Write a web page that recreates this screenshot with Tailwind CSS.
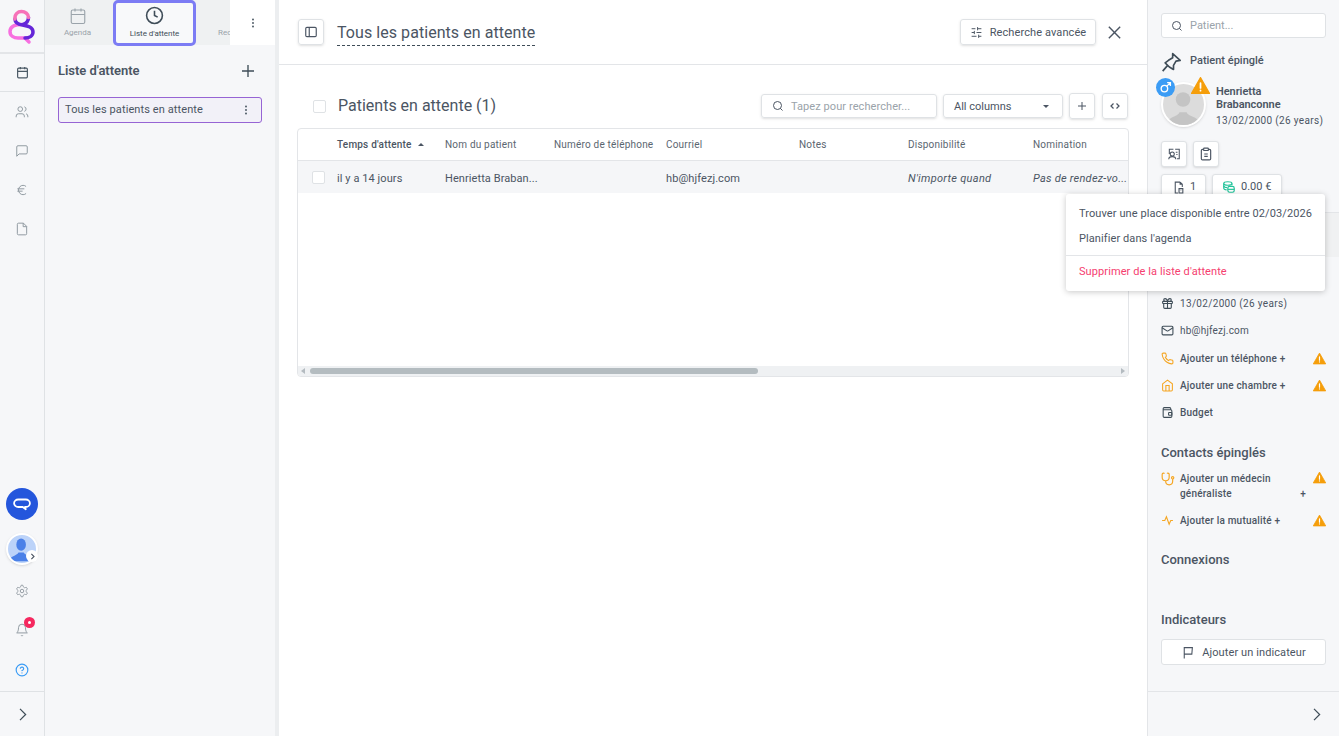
<!DOCTYPE html>
<html lang="fr">
<head>
    <meta charset="UTF-8">
    <meta name="viewport" content="width=device-width, initial-scale=1.0">
    <title>Liste d'attente</title>
    <script src="https://cdn.jsdelivr.net/npm/@tailwindcss/browser@4"></script>
</head>
<body class="h-screen overflow-hidden bg-white [font-family:Roboto,sans-serif] text-[#4b5563]">
    <svg class="hidden">
        <symbol id="warn" viewBox="0 0 24 24"><path d="M12 2 23.500 22H.5z" fill="#f59e0b" stroke="#f59e0b" stroke-width="1.500" stroke-linejoin="round"/><path d="M12 9v6M12 18v.5" stroke="#fff" stroke-width="2.200" stroke-linecap="round"/></symbol>
        <symbol id="search" viewBox="0 0 24 24"><circle cx="11" cy="11" r="8"/><path d="m21 21-4.300-4.300"/></symbol>
        <symbol id="dots" viewBox="0 0 24 24"><circle cx="12" cy="5" r="1.800" fill="currentColor" stroke="none"/><circle cx="12" cy="12" r="1.800" fill="currentColor" stroke="none"/><circle cx="12" cy="19" r="1.800" fill="currentColor" stroke="none"/></symbol>
    </svg>

    <div class="flex h-full">
        <!-- Rail de gauche -->
        <nav class="flex h-full w-[45px] shrink-0 flex-col border-r border-[#dfe2e5] bg-[#f6f7f9] text-[#8a949c]">
            <div class="flex h-[54px] items-center justify-center border-b-2 border-[#e3e5e8]">
                <svg class="shrink-0" width="34" height="38" viewBox="0 0 34 38" fill="none" stroke-linecap="round" stroke-linejoin="round">
                    <path d="M17 17.500C12 17.500 5 18 5 24.500 5 29 9 31 13 31h7l4 4" stroke="#f76fe0" stroke-width="3.500"/>
                    <path d="M10 12c0 4 4 5.500 7.500 6 5.500 1 10.500 2 10.500 7 0 4-4 6-8 6M23.500 10.500c0 3.500-2.500 6-5.500 7" stroke="#6526d8" stroke-width="3.500"/>
                    <path d="M10 12C9.500 7 13 4.500 16.500 4.500s7 2.500 7 6" stroke="#f772b8" stroke-width="3.500"/>
                </svg>
            </div>
            <div class="flex h-[38px] items-center justify-center border-b border-[#dfe2e5] text-[#4b5a66]">
                <svg class="h-[13px] w-[13px]" viewBox="0 0 24 24" fill="none" stroke="currentColor" stroke-width="2.200"><rect x="3" y="4" width="18" height="18" rx="2"/><path d="M16 2v4M8 2v4M3 10h18"/></svg>
            </div>
            <div class="flex h-[39px] items-center justify-center">
                <svg class="h-[14px] w-[14px]" viewBox="0 0 24 24" fill="none" stroke="currentColor" stroke-width="1.600"><path d="M16 21v-2a4 4 0 0 0-4-4H6a4 4 0 0 0-4 4v2"/><circle cx="9" cy="7" r="4"/><path d="M22 21v-2a4 4 0 0 0-3-3.870M16 3.130a4 4 0 0 1 0 7.750"/></svg>
            </div>
            <div class="flex h-[39px] items-center justify-center">
                <svg class="h-[14px] w-[14px]" viewBox="0 0 24 24" fill="none" stroke="currentColor" stroke-width="1.600"><path d="M21 15a2 2 0 0 1-2 2H7l-4 4V5a2 2 0 0 1 2-2h14a2 2 0 0 1 2 2z"/></svg>
            </div>
            <div class="flex h-[39px] items-center justify-center">
                <svg class="h-[14px] w-[14px]" viewBox="0 0 24 24" fill="none" stroke="currentColor" stroke-width="1.600"><path d="M4 10h12M4 14h9M19 6a7.700 8 0 0 0-5.200-2A7.900 8 0 0 0 6 12c0 4.400 3.500 8 7.800 8 2 0 3.800-.8 5.200-2"/></svg>
            </div>
            <div class="flex h-[39px] items-center justify-center">
                <svg class="h-[14px] w-[14px]" viewBox="0 0 24 24" fill="none" stroke="currentColor" stroke-width="1.600"><path d="M14.500 2H6a2 2 0 0 0-2 2v16a2 2 0 0 0 2 2h12a2 2 0 0 0 2-2V7.500L14.500 2z"/><path d="M14 2v6h6"/></svg>
            </div>

            <div class="mt-auto flex flex-col items-center">
                <div class="flex h-8 w-8 items-center justify-center rounded-full bg-[#2456dc]">
                    <svg class="h-[18px] w-[18px]" viewBox="0 0 24 24" fill="none" stroke="#fff" stroke-width="2.400" stroke-linejoin="round"><path d="M7 6h10a5 4.500 0 0 1 0 10h-1l1 3-4-3H7A5 4.500 0 0 1 7 6z"/></svg>
                </div>
                <div class="relative mt-[13px] h-8 w-8 overflow-hidden rounded-full border-2 border-white bg-[#bcd3f9] shadow-sm">
                    <svg class="h-full w-full" viewBox="0 0 32 32"><ellipse cx="15" cy="11" rx="5.500" ry="7" fill="#4a80e8"/><path d="M1 30c1-6 9-6 11-10h6c2 4 10 4 11 10z" fill="#4a80e8"/></svg>
                </div>
                <div class="relative -mt-[15px] ml-[20px] flex h-3 w-3 items-center justify-center rounded-full bg-white">
                    <svg class="h-[9px] w-[9px]" viewBox="0 0 24 24" fill="none" stroke="#4b5563" stroke-width="3"><path d="m9 5 7 7-7 7"/></svg>
                </div>
                <svg class="mt-[22px] h-[14px] w-[14px]" viewBox="0 0 24 24" fill="none" stroke="currentColor" stroke-width="1.500"><path d="M12.220 2h-.44a2 2 0 0 0-2 2v.18a2 2 0 0 1-1 1.730l-.43.25a2 2 0 0 1-2 0l-.15-.08a2 2 0 0 0-2.730.73l-.22.38a2 2 0 0 0 .73 2.730l.15.1a2 2 0 0 1 1 1.720v.51a2 2 0 0 1-1 1.740l-.15.09a2 2 0 0 0-.73 2.730l.22.38a2 2 0 0 0 2.730.73l.15-.08a2 2 0 0 1 2 0l.43.25a2 2 0 0 1 1 1.730V20a2 2 0 0 0 2 2h.44a2 2 0 0 0 2-2v-.18a2 2 0 0 1 1-1.730l.43-.25a2 2 0 0 1 2 0l.15.08a2 2 0 0 0 2.730-.73l.22-.39a2 2 0 0 0-.73-2.730l-.15-.08a2 2 0 0 1-1-1.740v-.5a2 2 0 0 1 1-1.740l.15-.09a2 2 0 0 0 .73-2.730l-.22-.38a2 2 0 0 0-2.730-.73l-.15.08a2 2 0 0 1-2 0l-.43-.25a2 2 0 0 1-1-1.730V4a2 2 0 0 0-2-2z"/><circle cx="12" cy="12" r="3"/></svg>
                <div class="relative mt-[25px] h-[14px] w-[14px]">
                    <svg class="h-[14px] w-[14px]" viewBox="0 0 24 24" fill="none" stroke="currentColor" stroke-width="1.600"><path d="M6 8a6 6 0 0 1 12 0c0 7 3 9 3 9H3s3-2 3-9M10.300 21a1.940 1.940 0 0 0 3.400 0"/></svg>
                    <span class="absolute -right-[6px] -top-[6px] flex h-[11px] w-[11px] items-center justify-center rounded-full bg-[#f5285f]"><span class="h-[3px] w-[3px] rounded-full bg-white"></span></span>
                </div>
                <svg class="mt-[26px] h-[14px] w-[14px]" viewBox="0 0 24 24" fill="none" stroke="#3b9cf5" stroke-width="2" stroke-linecap="round"><circle cx="12" cy="12" r="10"/><path d="M9.090 9a3 3 0 0 1 5.830 1c0 2-3 3-3 3M12 17h.01"/></svg>
            </div>
            <div class="mt-[14px] flex h-[45px] items-center justify-center border-t border-[#dfe2e5] text-[#3f4d58]">
                <svg class="h-[15px] w-[15px]" viewBox="0 0 24 24" fill="none" stroke="currentColor" stroke-width="2"><path d="m8 3 9 9-9 9"/></svg>
            </div>
        </nav>

        <!-- Colonne liste d'attente -->
        <aside class="flex h-full w-[234px] shrink-0 flex-col border-r-4 border-[#eceef0] bg-[#f6f7f9]">
            <div class="relative flex h-[45px] bg-[#eff1f2] text-[8px] text-[#9aa3aa]">
                <div class="flex w-[68px] flex-col items-center pr-[3px] pt-[7px]">
                    <svg class="h-[18px] w-[18px]" viewBox="0 0 24 24" fill="none" stroke="currentColor" stroke-width="1.500"><rect x="3" y="4" width="18" height="18" rx="2"/><path d="M16 2v4M8 2v4M3 10h18"/></svg>
                    <span class="mt-[2px]">Agenda</span>
                </div>
                <div class="-mb-[1px] flex w-[83px] flex-col items-center rounded-[5px] border-[3px] border-[#7c7cf4] bg-[#f8f9fa] pt-[3px] text-[#3f4d58]">
                    <svg class="h-[19px] w-[19px]" viewBox="0 0 24 24" fill="none" stroke="#3f4d58" stroke-width="2"><circle cx="12" cy="12" r="10"/><path d="M12 6v6l4 2"/></svg>
                    <span class="mt-[3px] tracking-[-0.05px]">Liste d'attente</span>
                </div>
                <div class="overflow-hidden pl-[22px] pt-[27px]"><span>Rec</span></div>
                <div class="absolute right-0 top-0 flex h-[45px] w-[45px] items-center justify-center bg-white text-[#3f4d58]">
                    <svg class="h-3 w-3" viewBox="0 0 24 24" fill="none"><use href="#dots"/></svg>
                </div>
            </div>
            <div class="flex items-center justify-between pl-[13px] pr-[18px] pt-[16px]">
                <h2 class="text-[13px] font-semibold tracking-[-0.05px] text-[#4b5563]">Liste d'attente</h2>
                <svg class="h-[18px] w-[18px] text-[#3f4d58]" viewBox="0 0 24 24" fill="none" stroke="currentColor" stroke-width="1.800"><path d="M12 4v16M4 12h16"/></svg>
            </div>
            <div class="mx-[13px] mt-[16px] flex h-[26px] items-center justify-between rounded-[3px] border border-[#9664d4] bg-[#f2f1f8] pl-[6px] pr-[9px] text-[11px] tracking-[0.1px]">
                <span class="pt-[2px]">Tous les patients en attente</span>
                <svg class="h-3 w-3 text-[#3f4d58]" viewBox="0 0 24 24" fill="none"><use href="#dots"/></svg>
            </div>
        </aside>

        <!-- Contenu principal -->
        <main class="flex h-full min-w-0 flex-1 flex-col border-r border-[#e3e5e8]">
            <header class="flex h-[65px] shrink-0 items-center border-b border-[#e3e5e8] pl-[19px] pr-[24px]">
                <button class="flex h-[26px] w-[26px] items-center justify-center rounded-[3px] border border-[#dfe2e5] shadow-sm">
                    <svg class="h-[14px] w-[14px]" viewBox="0 0 24 24" fill="none" stroke="currentColor" stroke-width="2"><rect x="3" y="4" width="18" height="16" rx="2"/><path d="M9 4v16"/></svg>
                </button>
                <h1 class="ml-[13px] mt-[1px] border-b border-dashed border-[#3f4d58] text-[16px] leading-[25px] tracking-[0.06px] text-[#4b5563]">Tous les patients en attente</h1>
                <button class="ml-auto flex h-[26px] w-[136px] items-center justify-center gap-[7px] rounded-[3px] border border-[#dfe2e5] text-[11px] tracking-[0.1px] shadow-sm">
                    <svg class="h-[13px] w-[13px]" viewBox="0 0 24 24" fill="none" stroke="currentColor" stroke-width="1.800"><path d="M21 5h-7M10 5H3M21 12h-9M8 12H3M21 19h-5M12 19H3M14 2v6M8 9v6M16 16v6"/></svg>
                    <span class="pt-[2px]">Recherche avancée</span>
                </button>
                <svg class="ml-[10px] h-[17px] w-[17px]" viewBox="0 0 24 24" fill="none" stroke="currentColor" stroke-width="2"><path d="M4 4l16 16M20 4 4 20"/></svg>
            </header>

            <section class="px-[18px] pt-[28px]">
                <div class="flex h-[26px] items-center pr-[1px]">
                    <span class="ml-[16px] h-[13px] w-[13px] rounded-[2px] border border-[#dfe2e5] bg-white"></span>
                    <h2 class="ml-[12px] text-[16px]">Patients en attente (1)</h2>
                    <div class="ml-auto flex h-6 w-[176px] items-center rounded-[3px] border border-[#dfe2e5] pl-[10px] text-[11px] tracking-[0.08px] text-[#9aa3aa] shadow-sm">
                        <svg class="h-3 w-3 text-[#4b5563]" viewBox="0 0 24 24" fill="none" stroke="currentColor" stroke-width="2"><use href="#search"/></svg>
                        <span class="ml-[7px] pt-[2px]">Tapez pour rechercher...</span>
                    </div>
                    <div class="ml-[6px] flex h-6 w-[120px] items-center justify-between rounded-[3px] border border-[#dfe2e5] pl-[10px] pr-[13px] text-[11px] shadow-sm">
                        <span class="pt-[2px]">All columns</span>
                        <span class="h-0 w-0 border-x-[3px] border-t-[3px] border-x-transparent border-t-[#4b5563]"></span>
                    </div>
                    <button class="ml-[6px] flex h-[26px] w-[26px] items-center justify-center rounded-[3px] border border-[#dfe2e5] shadow-sm">
                        <svg class="h-3 w-3" viewBox="0 0 24 24" fill="none" stroke="currentColor" stroke-width="2"><path d="M12 4v16M4 12h16"/></svg>
                    </button>
                    <button class="ml-[7px] flex h-[26px] w-[26px] items-center justify-center rounded-[3px] border border-[#dfe2e5] shadow-sm">
                        <svg class="h-3 w-3" viewBox="0 0 24 24" fill="none" stroke="currentColor" stroke-width="2.500"><path d="M9 7l-5 5 5 5M15 7l5 5-5 5"/></svg>
                    </button>
                </div>

                <div class="mt-[9px] flex h-[249px] w-[832px] flex-col overflow-hidden rounded-[4px] border border-[#e3e5e8]">
                    <div class="grid h-[32px] shrink-0 grid-cols-[39px_108px_109px_112px_133px_109px_125px_1fr] items-center border-b border-[#e3e5e8] text-[10px] tracking-[0.2px] text-[#5b6670]">
                        <span></span>
                        <span class="flex items-center gap-[6px] font-medium text-[#4b5563]">Temps d'attente <span class="h-0 w-0 border-x-[3px] border-b-[3px] border-x-transparent border-b-[#4b5563]"></span></span>
                        <span>Nom du patient</span>
                        <span>Numéro de téléphone</span>
                        <span>Courriel</span>
                        <span>Notes</span>
                        <span>Disponibilité</span>
                        <span>Nomination</span>
                    </div>
                    <div class="grid h-[32px] shrink-0 grid-cols-[39px_108px_109px_112px_133px_109px_125px_1fr] items-center bg-[#f5f6f8] text-[11px] tracking-[0.08px]">
                        <span class="ml-[14px] h-[13px] w-[13px] rounded-[2px] border border-[#dfe2e5] bg-white"></span>
                        <span class="pt-[4px]">il y a 14 jours</span>
                        <span class="pt-[4px]">Henrietta Braban...</span>
                        <span></span>
                        <span class="pt-[4px]">hb@hjfezj.com</span>
                        <span></span>
                        <span class="pt-[4px] italic tracking-[0.3px]">N'importe quand</span>
                        <span class="pt-[4px] italic tracking-[0.25px] whitespace-nowrap">Pas de rendez-vo...</span>
                    </div>
                    <div class="mt-auto flex h-[10px] shrink-0 items-center bg-[#eff1f3] px-[3px]">
                        <span class="h-0 w-0 border-y-[3px] border-r-[4px] border-y-transparent border-r-[#b4bbc0]"></span>
                        <span class="ml-[5px] h-[6px] w-[448px] rounded-[3px] bg-[#b4bcc0]"></span>
                        <span class="ml-auto h-0 w-0 border-y-[3px] border-l-[4px] border-y-transparent border-l-[#b4bbc0]"></span>
                    </div>
                </div>
            </section>
        </main>

        <!-- Panneau patient -->
        <aside class="flex h-full w-[191px] shrink-0 flex-col bg-[#f6f7f9] text-[11px]">
            <div class="flex-1 px-[13px] pt-[13px]">
                <div class="flex h-[25px] items-center rounded-[3px] border border-[#dfe2e5] bg-white pl-[9px] pt-[1px] text-[#9aa3aa]">
                    <svg class="h-3 w-3 text-[#4b5563]" viewBox="0 0 24 24" fill="none" stroke="currentColor" stroke-width="2"><use href="#search"/></svg>
                    <span class="ml-[7px]">Patient...</span>
                </div>
                <div class="mt-[13px] flex h-[21px] items-center gap-[9px]">
                    <svg class="h-[20px] w-[20px] text-[#3f4d58]" viewBox="0 0 24 24" fill="none" stroke="currentColor" stroke-width="2" stroke-linejoin="round"><path d="M14 2 23 10l-5 1-3 5 0 5-5-3-5-5 4-3 5-3zM8 16 2 23"/></svg>
                    <span class="font-medium">Patient épinglé</span>
                </div>
                <div class="relative mt-[10px] flex h-[54px]">
                    <div class="h-[45px] w-[45px] shrink-0 overflow-hidden rounded-full border-2 border-white bg-[#dcdcdc] shadow-sm">
                        <svg class="h-full w-full" viewBox="0 0 45 45"><circle cx="22" cy="17" r="8" fill="#c4c4c4"/><path d="M4 45c1-10 13-9 14-14h8c1 5 14 4 15 14z" fill="#c4c4c4"/></svg>
                    </div>
                    <span class="absolute -left-[5px] -top-[4px] flex h-[19px] w-[19px] items-center justify-center rounded-full bg-[#3b9cf5]">
                        <svg class="h-[13px] w-[13px]" viewBox="0 0 24 24" fill="none" stroke="#fff" stroke-width="2.500"><circle cx="10" cy="14" r="6"/><path d="m14.500 9.500 6-6M15 3h6v6"/></svg>
                    </span>
                    <svg class="absolute left-[30px] -top-[6px] h-[19px] w-[19px]"><use href="#warn"/></svg>
                    <div class="ml-[10px] pt-[3px] leading-[13px]">
                        <div class="font-semibold tracking-[-0.05px]">Henrietta<br>Brabanconne</div>
                        <div class="mt-[3px] whitespace-nowrap text-[10px] tracking-[0.33px]">13/02/2000 (26 years)</div>
                    </div>
                </div>
                <div class="mt-[5px] flex gap-[6px]">
                    <button class="flex h-[26px] w-[26px] items-center justify-center rounded-[3px] border border-[#dfe2e5] bg-white shadow-sm">
                        <svg class="h-[14px] w-[14px]" viewBox="0 0 24 24" fill="none" stroke="currentColor" stroke-width="1.800"><path d="M14 4h7v16h-4M4 12V4h7"/><circle cx="9" cy="12" r="3.500"/><path d="M3 21c0-6 12-6 12 0M15 9h3M16 13h2"/></svg>
                    </button>
                    <button class="flex h-[26px] w-[26px] items-center justify-center rounded-[3px] border border-[#dfe2e5] bg-white shadow-sm">
                        <svg class="h-[14px] w-[14px]" viewBox="0 0 24 24" fill="none" stroke="currentColor" stroke-width="2"><rect x="8" y="2" width="8" height="4" rx="1"/><path d="M16 4h2a2 2 0 0 1 2 2v14a2 2 0 0 1-2 2H6a2 2 0 0 1-2-2V6a2 2 0 0 1 2-2h2M9 12h6M9 16h6"/></svg>
                    </button>
                </div>
                <div class="mt-[7px] flex gap-[6px]">
                    <div class="flex h-[26px] w-[45px] items-center gap-[5px] rounded-[3px] border border-[#dfe2e5] bg-white pl-[10px] shadow-sm">
                        <svg class="h-[13px] w-[13px]" viewBox="0 0 24 24" fill="none" stroke="currentColor" stroke-width="2"><path d="M15 2H6v20h5M15 2l4 4v5M15 2v4h4M13 14h7v8h-7zM16 17h1"/></svg>
                        1
                    </div>
                    <div class="flex h-[26px] w-[70px] items-center gap-[5px] rounded-[3px] border border-[#dfe2e5] bg-white pl-[9px] shadow-sm">
                        <svg class="h-[14px] w-[14px]" viewBox="0 0 24 24" fill="none" stroke="#22c39a" stroke-width="2"><ellipse cx="10" cy="6" rx="7" ry="3"/><path d="M3 6v8c0 1.500 2 2.500 5 3M17 6v3"/><path d="M3 10c0 1.500 3 3 6 3"/><rect x="10" y="11" width="11" height="10" rx="3"/><path d="M10 16h11"/></svg>
                        0.00 €
                    </div>
                </div>
                <div class="-mx-[13px] mt-[12px] h-[74px] border-t border-[#e3e5e8]">
                    <div class="h-[44px] bg-[#f0f1f2]"></div>
                </div>

                <ul class="mt-[4px] flex flex-col text-[10px] tracking-[0.2px]">
                    <li class="flex h-[27px] items-center gap-[6px] tracking-[0.33px]">
                        <svg class="h-[13px] w-[13px]" viewBox="0 0 24 24" fill="none" stroke="#3f4d58" stroke-width="2"><rect x="3" y="8" width="18" height="4" rx="1"/><path d="M12 8v13M19 12v7a2 2 0 0 1-2 2H7a2 2 0 0 1-2-2v-7M7.500 8a2.500 2.500 0 0 1 0-5A4.800 8 0 0 1 12 8a4.800 8 0 0 1 4.500-5 2.500 2.500 0 0 1 0 5"/></svg>
                        13/02/2000 (26 years)
                    </li>
                    <li class="flex h-[27px] items-center gap-[6px]">
                        <svg class="h-[13px] w-[13px]" viewBox="0 0 24 24" fill="none" stroke="#3f4d58" stroke-width="2"><rect x="2" y="4" width="20" height="16" rx="2"/><path d="m22 7-8.970 5.700a1.940 1.940 0 0 1-2.060 0L2 7"/></svg>
                        hb@hjfezj.com
                    </li>
                    <li class="flex h-[28px] items-center gap-[6px] pt-[1px] font-medium">
                        <svg class="h-[13px] w-[13px]" viewBox="0 0 24 24" fill="none" stroke="#f5a623" stroke-width="2"><path d="M22 16.920v3a2 2 0 0 1-2.180 2 19.790 19.790 0 0 1-8.630-3.070 19.500 19.500 0 0 1-6-6 19.790 19.790 0 0 1-3.070-8.670A2 2 0 0 1 4.110 2h3a2 2 0 0 1 2 1.720 12.840 12.840 0 0 0 .7 2.810 2 2 0 0 1-.45 2.110L8.090 9.910a16 16 0 0 0 6 6l1.270-1.270a2 2 0 0 1 2.110-.45 12.840 12.840 0 0 0 2.810.7A2 2 0 0 1 22 16.920z"/></svg>
                        Ajouter un téléphone +
                        <svg class="ml-auto h-[13px] w-[13px]"><use href="#warn"/></svg>
                    </li>
                    <li class="flex h-[27px] items-center gap-[6px] font-medium">
                        <svg class="h-[13px] w-[13px]" viewBox="0 0 24 24" fill="none" stroke="#f5a623" stroke-width="2"><path d="m3 9 9-7 9 7v11a2 2 0 0 1-2 2H5a2 2 0 0 1-2-2z"/><path d="M9 22V12h6v10"/></svg>
                        Ajouter une chambre +
                        <svg class="ml-auto h-[13px] w-[13px]"><use href="#warn"/></svg>
                    </li>
                    <li class="flex h-[27px] items-center gap-[6px] font-medium">
                        <svg class="h-[13px] w-[13px]" viewBox="0 0 24 24" fill="none" stroke="#3f4d58" stroke-width="2"><path d="M18 7V5a2 2 0 0 0-2-2H6a2 2 0 0 0-2 2v14a2 2 0 0 0 2 2h12a2 2 0 0 0 2-2V9a2 2 0 0 0-2-2H4"/><rect x="14" y="12" width="6" height="5" rx="1"/></svg>
                        Budget
                    </li>
                </ul>

                <h3 class="mt-[18px] text-[13px] font-medium leading-[18px]">Contacts épinglés</h3>
                <div class="mt-[9px] flex font-medium text-[10px] leading-[15px] tracking-[0.2px]">
                    <svg class="mt-[1px] h-[14px] w-[14px] shrink-0" viewBox="0 0 24 24" fill="none" stroke="#f5a623" stroke-width="2"><path d="M4.800 2.300A.3.3 0 1 0 5 2H4a2 2 0 0 0-2 2v5a6 6 0 0 0 6 6 6 6 0 0 0 6-6V4a2 2 0 0 0-2-2h-1a.2.2 0 1 0 .3.3M8 15v1a6 6 0 0 0 6 6 6 6 0 0 0 6-6v-4"/><circle cx="20" cy="10" r="2"/></svg>
                    <div class="ml-[5px] grid flex-1 grid-cols-[1fr_13px] pr-[7px]">
                        <span>Ajouter un médecin<br>généraliste</span>
                        <span class="self-end justify-self-end">+</span>
                    </div>
                    <svg class="h-[13px] w-[13px] shrink-0"><use href="#warn"/></svg>
                </div>
                <div class="mt-[12px] flex h-[15px] items-center font-medium text-[10px] tracking-[0.2px]">
                    <svg class="h-[13px] w-[13px] shrink-0" viewBox="0 0 24 24" fill="none" stroke="#f5a623" stroke-width="2"><path d="M22 12h-4l-3 7-5-14-3 7H2"/></svg>
                    <span class="ml-[6px]">Ajouter la mutualité +</span>
                    <svg class="ml-auto h-[13px] w-[13px] shrink-0"><use href="#warn"/></svg>
                </div>

                <h3 class="mt-[23px] text-[13px] font-medium leading-[18px]">Connexions</h3>
                <h3 class="mt-[42px] text-[13px] font-medium leading-[18px]">Indicateurs</h3>
                <button class="mt-[10px] flex h-[26px] w-full items-center justify-center gap-[8px] rounded-[3px] border border-[#dfe2e5] bg-white tracking-[0.1px]">
                    <svg class="h-[13px] w-[13px]" viewBox="0 0 24 24" fill="none" stroke="currentColor" stroke-width="2"><path d="M6 23V3h15l-1 12H6"/></svg>
                    <span class="pt-[2px]">Ajouter un indicateur</span>
                </button>
            </div>
            <div class="flex h-[45px] shrink-0 items-center justify-end border-t border-[#e3e5e8] pr-[15px] text-[#3f4d58]">
                <svg class="h-[15px] w-[15px]" viewBox="0 0 24 24" fill="none" stroke="currentColor" stroke-width="2"><path d="m8 3 9 9-9 9"/></svg>
            </div>
        </aside>
    </div>

    <!-- Menu contextuel -->
    <div class="absolute left-[1066px] top-[194px] h-[97px] w-[259px] rounded-[3px] bg-white text-[11px] tracking-[0.09px] shadow-[0_1px_6px_rgba(0,0,0,0.22)]">
        <div class="flex h-[33px] items-end whitespace-nowrap px-[13px] pb-[5px]">Trouver une place disponible entre 02/03/2026</div>
        <div class="flex h-[25px] items-center px-[13px]">Planifier dans l'agenda</div>
        <div class="mt-[3px] border-t border-[#e3e5e8]"></div>
        <div class="flex h-[31px] items-center px-[13px] pt-[1px] text-[#f5406f]">Supprimer de la liste d'attente</div>
    </div>
</body>
</html>
